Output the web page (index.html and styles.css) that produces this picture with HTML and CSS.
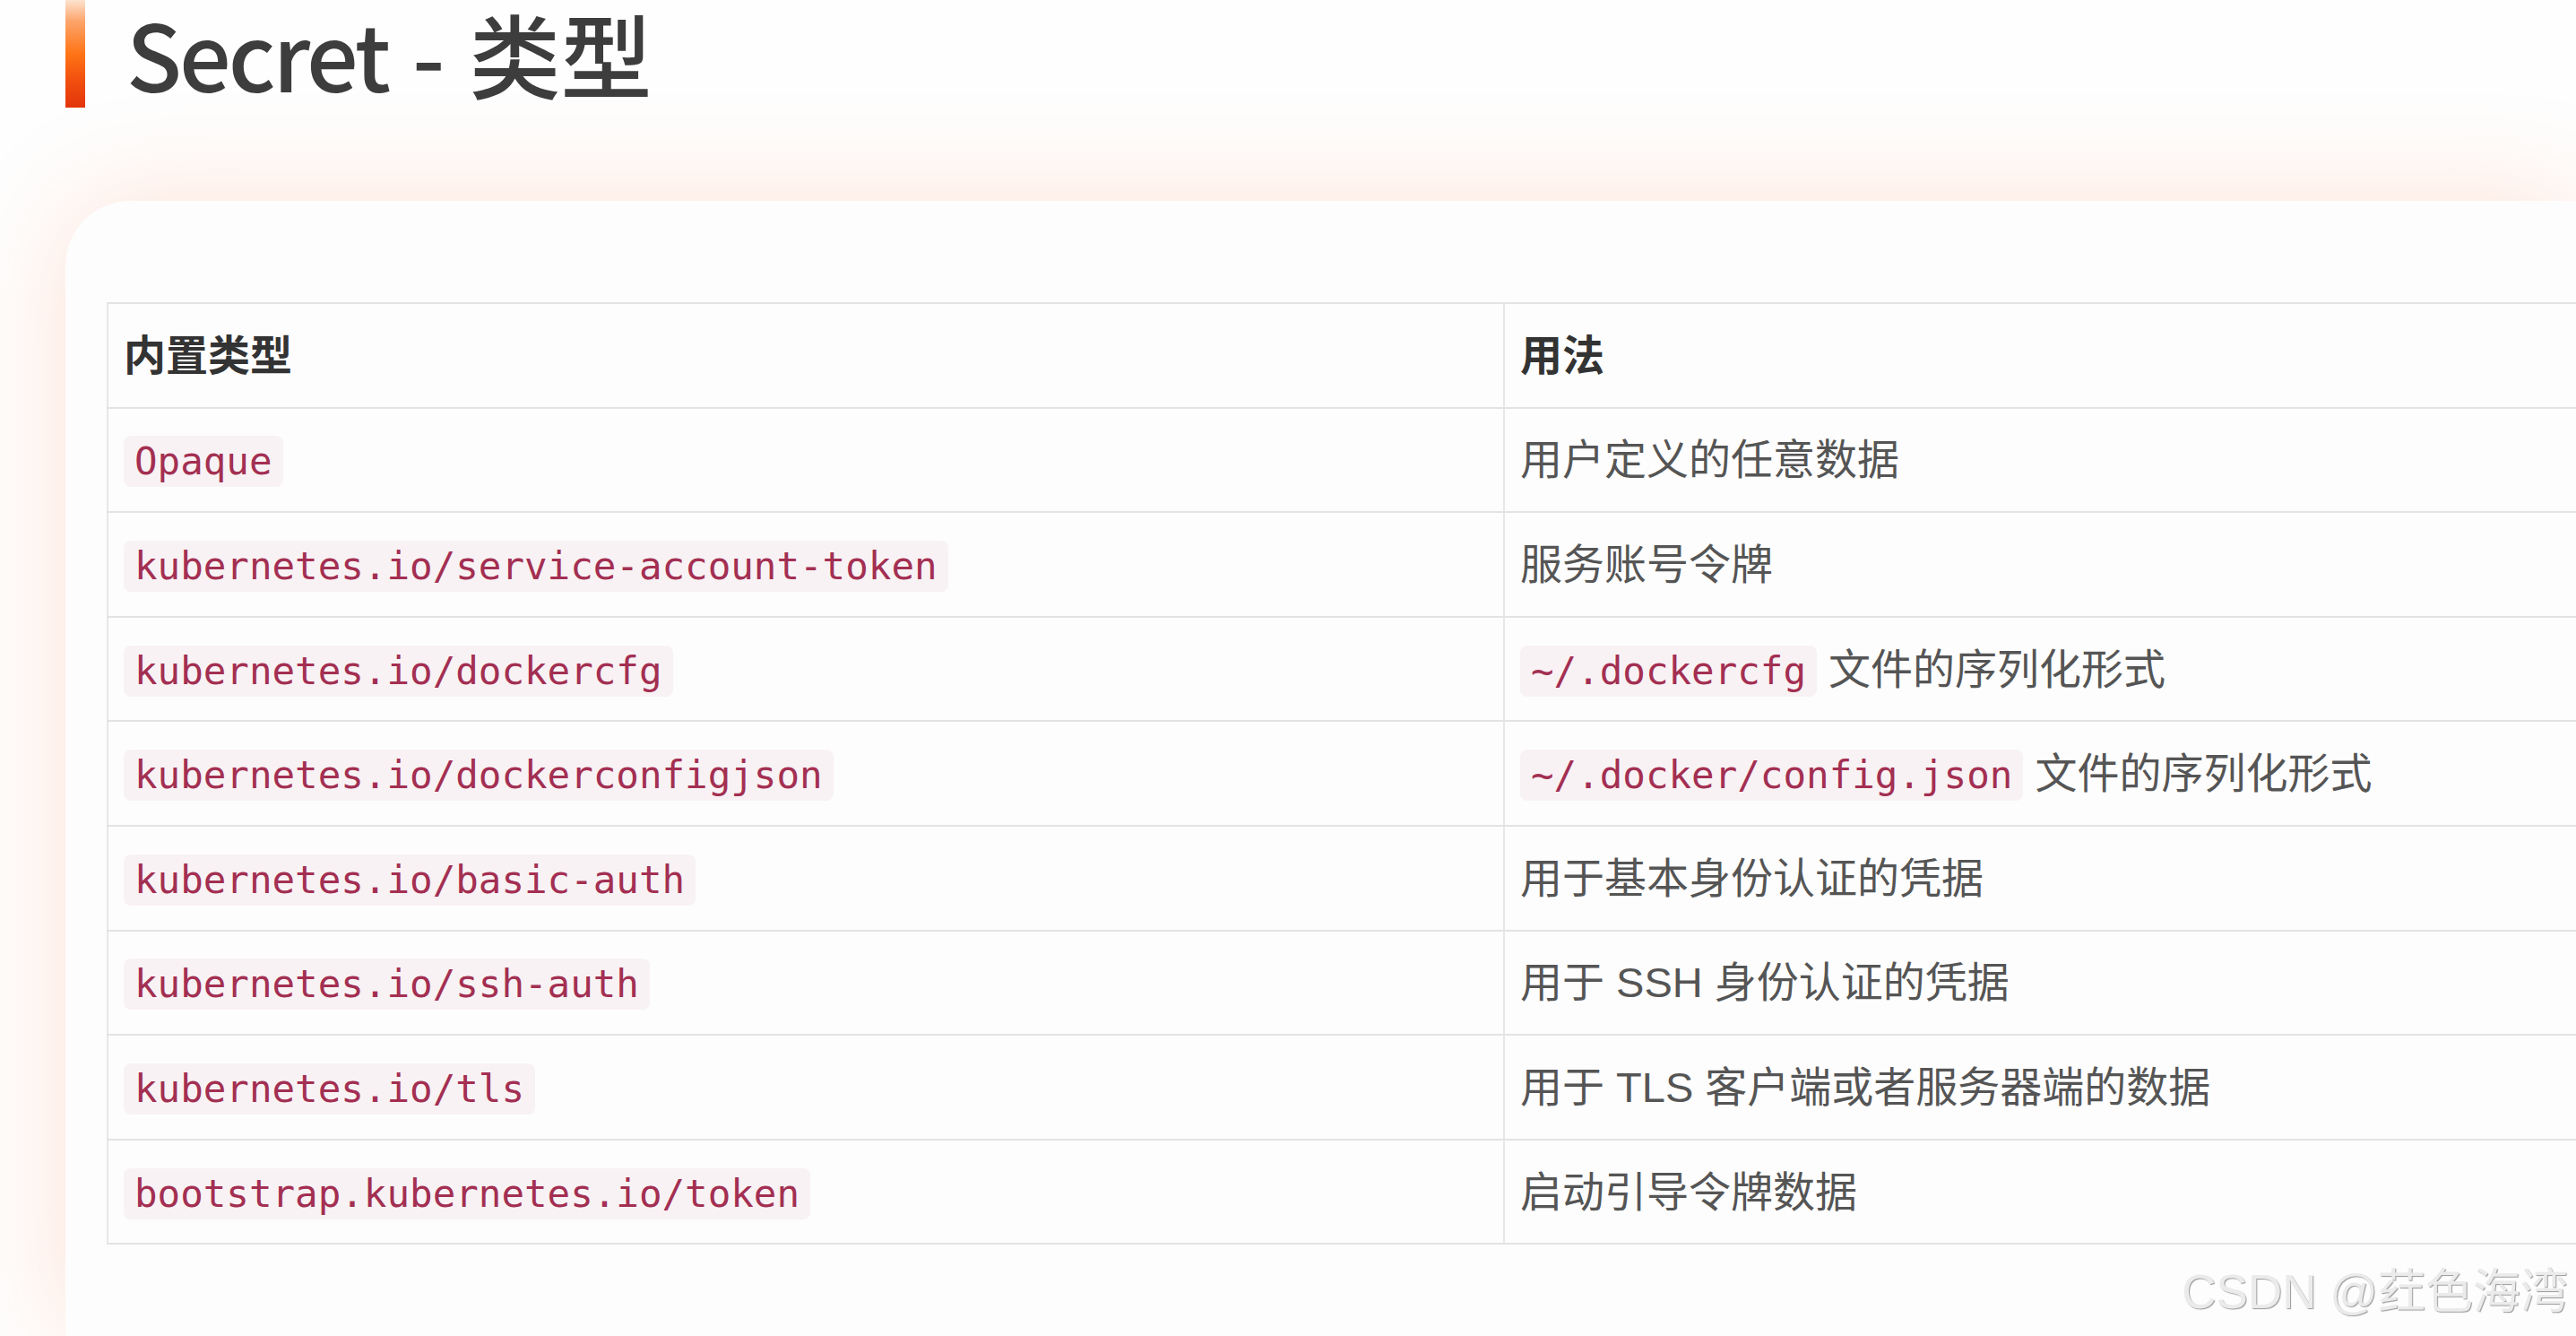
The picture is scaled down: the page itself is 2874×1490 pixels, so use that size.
FILE: index.html
```html
<!DOCTYPE html>
<html lang="zh-CN">
<head>
<meta charset="utf-8">
<title>Secret - 类型</title>
<link rel="stylesheet" href="styles.css">
</head>
<body>
<div class="slide">
  <header class="head">
    <div class="accent"></div>
    <h1 class="title"><span class="latin">Secret</span> - 类型</h1>
  </header>
  <section class="card">
    <table class="types">
      <colgroup><col class="c1"><col class="c2"></colgroup>
      <thead>
        <tr><th>内置类型</th><th>用法</th></tr>
      </thead>
      <tbody>
        <tr><td><code>Opaque</code></td><td>用户定义的任意数据</td></tr>
        <tr><td><code>kubernetes.io/service-account-token</code></td><td>服务账号令牌</td></tr>
        <tr><td><code>kubernetes.io/dockercfg</code></td><td><code>~/.dockercfg</code> 文件的序列化形式</td></tr>
        <tr><td><code>kubernetes.io/dockerconfigjson</code></td><td><code>~/.docker/config.json</code> 文件的序列化形式</td></tr>
        <tr><td><code>kubernetes.io/basic-auth</code></td><td>用于基本身份认证的凭据</td></tr>
        <tr><td><code>kubernetes.io/ssh-auth</code></td><td>用于 SSH 身份认证的凭据</td></tr>
        <tr><td><code>kubernetes.io/tls</code></td><td>用于 TLS 客户端或者服务器端的数据</td></tr>
        <tr><td><code>bootstrap.kubernetes.io/token</code></td><td>启动引导令牌数据</td></tr>
      </tbody>
    </table>
  </section>
  <div class="watermark">CSDN @荭色海湾</div>
</div>
</body>
</html>
```

FILE: styles.css
```css
html, body {
  margin: 0;
  padding: 0;
}
body {
  width: 2874px;
  height: 1490px;
  overflow: hidden;
  background: #fefefe;
  font-family: "Liberation Sans", "Noto Sans CJK SC", sans-serif;
}
.slide {
  position: relative;
  width: 2874px;
  height: 1490px;
  overflow: hidden;
  background: #fefefe;
}
.head {
  display: flex;
  align-items: flex-start;
  height: 224px;
  padding-left: 73px;
  box-sizing: border-box;
}
.accent {
  width: 22px;
  height: 120px;
  flex: none;
  background: linear-gradient(to bottom, #fde3cf 0%, #fca46a 20%, #ff7416 50%, #f14f0f 75%, #e3340b 100%);
}
.title {
  margin: 8px 0 0 46px;
  font-family: "Noto Sans CJK SC", sans-serif;
  font-weight: 500;
  font-size: 102px;
  line-height: 102px;
  color: #3d3d3d;
  letter-spacing: 0;
  word-spacing: 4px;
}
.title .latin {
  letter-spacing: -3px;
}
.card {
  margin-left: 73px;
  height: 1266px;
  background: #fdfdfd;
  border-top-left-radius: 72px;
  box-shadow: 0 0 120px rgba(255, 125, 70, 0.22);
  padding: 113px 0 0 46px;
  box-sizing: border-box;
}
.types {
  border-collapse: collapse;
  table-layout: fixed;
  width: 2860px;
  font-size: 47px;
  color: #555;
}
.types col.c1 { width: 1558px; }
.types col.c2 { width: 1302px; }
.types th,
.types td {
  height: 114.6px;
  padding: 0 17px;
  text-align: left;
  vertical-align: middle;
  border-top: 2px solid #e3e3e3;
  border-bottom: 2px solid #e3e3e3;
  border-left: 2px solid #e7e7e7;
  border-right: 2px solid #e7e7e7;
  white-space: nowrap;
  line-height: 1.3;
}
.types th {
  font-weight: 700;
  color: #333;
}
.types code {
  font-family: "DejaVu Sans Mono", monospace;
  font-size: 42.5px;
  color: #a32f52;
  background: #f8f2f4;
  border-radius: 8px;
  padding: 4px 12px;
  line-height: 51px;
}
.watermark {
  position: absolute;
  right: 9px;
  top: 1414px;
  font-family: "Liberation Sans", "Noto Sans CJK SC", sans-serif;
  font-size: 53px;
  line-height: 53px;
  color: #ebebeb;
  text-shadow: 1px 1px 1px rgba(0, 0, 0, 0.4);
  white-space: nowrap;
}
```
